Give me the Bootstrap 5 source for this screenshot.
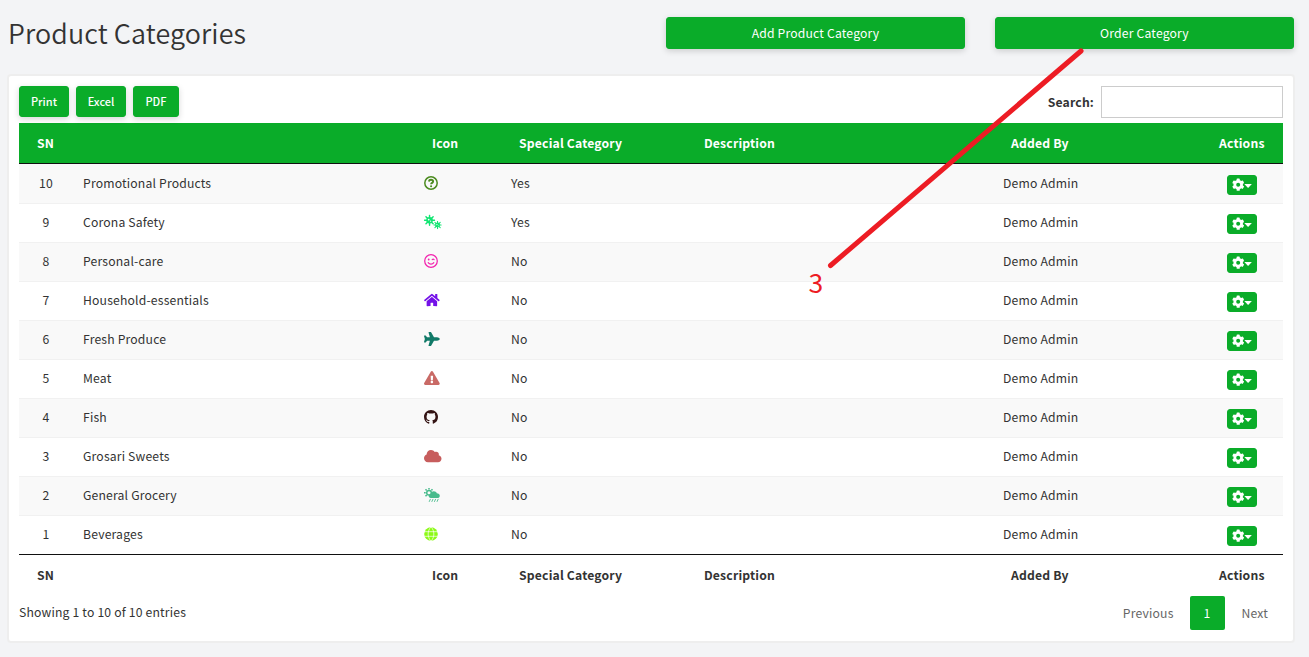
<!DOCTYPE html>
<html lang="en">
<head>
<meta charset="utf-8">
<meta name="viewport" content="width=device-width, initial-scale=1">
<title>Product Categories</title>
<link href="https://cdn.jsdelivr.net/npm/bootstrap@5.3.0/dist/css/bootstrap.min.css" rel="stylesheet">
<style>
  :root { --brand: #0aac29; }
  body { font-family: "Noto Sans CJK SC", "Source Sans Pro", sans-serif; font-size: 12.2px; line-height: 18px; color: #333; background: #f3f4f6; height: 657px; overflow: hidden; position: relative; letter-spacing: .17px; }
  .page-head { height: 74px; padding: 16px 15px 0 8px; }
  .page-head h1 { font-family: "Noto Sans CJK SC DemiLight", "Noto Sans CJK SC", sans-serif; font-size: 26.9px; font-weight: 350; line-height: 34px; letter-spacing: .12px; margin: 0; color: #333; }
  .head-actions { gap: 30px; padding-top: 1px; }
  .btn-brand { --bs-btn-color: #fff; --bs-btn-bg: var(--brand); --bs-btn-border-color: var(--brand); --bs-btn-hover-color: #fff; --bs-btn-hover-bg: #088f22; --bs-btn-hover-border-color: #088f22; --bs-btn-border-radius: 3px; font-size: inherit; line-height: 18px; box-shadow: 0 2px 6px rgba(0,0,0,.16); }
  .btn-wide { width: 299px; height: 32px; padding: 6px; }
  .panel { margin: 0 14px 0 7px; border: 2px solid #eee; border-radius: 4px; height: 569px; padding: 10px 10px 0 10px; }
  .tools { height: 37px; }
  .btn-tool { height: 31px; padding: 4px 0 6px; width: 50px; font-size: 11px; font-weight: 500; letter-spacing: 0; }
  .btn-tool-sm { width: 46px; }
  .search-box { width: 182px; height: 32px; border: 1px solid #ccc; border-radius: 0; padding: 4px 8px; margin-left: 7px; font-size: 12.2px; }
  .cat-table { --bs-table-color: #333; table-layout: fixed; margin: 0; width: 1264px; border-collapse: separate; border-spacing: 0; }
  .cat-table > :not(caption) > * > * { padding: 0 10px 2px; border: 0; height: 39px; box-shadow: none; background: transparent; vertical-align: middle; }
  .cat-table > tbody > tr:nth-child(odd) { background: #f9f9f9; }
  .cat-table > tbody > tr + tr > td { border-top: 1px solid #f1f1f1; padding-bottom: 3px; }
  .cat-table > thead > tr > th { background: var(--brand); color: #fff; border-bottom: 1px solid #111; height: 41px; padding: 0 0 0 18px; }
  .cat-table > tfoot > tr > th { border-top: 1px solid #111; height: 42px; padding: 0 0 2px 18px; color: #333; }
  .ico { display: block; height: 14px; width: auto; overflow: visible; }
  .btn-gear { width: 30px; height: 20px; padding: 0; border-radius: 3px; box-shadow: none; display: inline-flex; vertical-align: middle; transform: translateY(2px); }
  .pager .page-link { border: 0; background: transparent; color: #666; height: 34px; padding: 8px 0; font-size: 12.2px; line-height: 18px; text-align: center; }
  .pager { padding-right: 15px; }
  .pager .active .page-link { background: var(--brand); color: #fff; width: 35px; border-radius: 2px; margin: 0 18px 0 16px; }
  .callout { position: absolute; left: 0; top: 0; pointer-events: none; }
</style>
</head>
<body>
<svg class="d-none">
  <symbol id="gear" viewBox="0 0 30 20">
    <path fill="#fff" transform="translate(4.9 3.4) scale(.0246)" d="M487.4 315.7l-42.6-24.6c4.3-23.2 4.3-47 0-70.2l42.6-24.6c4.9-2.8 7.1-8.6 5.5-14-11.1-35.6-30-67.8-54.7-94.6-3.8-4.1-10-5.1-14.8-2.3L380.8 110c-17.9-15.4-38.5-27.3-60.8-35.1V25.8c0-5.6-3.9-10.5-9.4-11.7-36.7-8.2-74.3-7.8-109.2 0-5.5 1.2-9.4 6.1-9.4 11.7V75c-22.2 7.9-42.8 19.8-60.8 35.1L88.7 85.5c-4.9-2.8-11-1.9-14.8 2.3-24.7 26.7-43.6 58.9-54.7 94.6-1.7 5.4.6 11.2 5.5 14L67.3 221c-4.3 23.2-4.3 47 0 70.2l-42.6 24.6c-4.9 2.8-7.1 8.6-5.5 14 11.1 35.6 30 67.8 54.7 94.6 3.8 4.1 10 5.1 14.8 2.3l42.6-24.6c17.9 15.4 38.5 27.3 60.8 35.1v49.2c0 5.6 3.9 10.5 9.4 11.7 36.7 8.2 74.3 7.8 109.2 0 5.5-1.2 9.4-6.1 9.4-11.7v-49.2c22.2-7.9 42.8-19.8 60.8-35.1l42.6 24.6c4.9 2.8 11 1.9 14.8-2.3 24.7-26.7 43.6-58.9 54.7-94.6 1.5-5.5-.7-11.3-5.6-14.1zM256 336c-44.1 0-80-35.9-80-80s35.9-80 80-80 80 35.9 80 80-35.9 80-80 80z"/>
    <path fill="#fff" d="M17.3 9h7.6l-3.8 3.9z"/>
  </symbol>
  <symbol id="germ" viewBox="-8 -8 16 16">
    <path stroke="currentColor" stroke-width="2" stroke-linecap="round" d="M0-7V7M-7 0H7M-5-5L5 5M-5 5L5-5"/>
    <circle r="4.6" fill="currentColor"/><circle cx="-1.2" cy="-1" r="1.2" fill="#fff"/><circle cx="1.5" cy="1.3" r=".8" fill="#fff"/>
  </symbol>
</svg>

<header class="page-head d-flex justify-content-between align-items-start">
  <h1>Product Categories</h1>
  <div class="head-actions d-flex">
    <a class="btn btn-brand btn-wide">Add Product Category</a>
    <a class="btn btn-brand btn-wide">Order Category</a>
  </div>
</header>

<main class="panel bg-white">
  <div class="tools d-flex justify-content-between align-items-start">
    <div class="d-flex" style="gap:7px">
      <button class="btn btn-brand btn-tool">Print</button>
      <button class="btn btn-brand btn-tool">Excel</button>
      <button class="btn btn-brand btn-tool btn-tool-sm">PDF</button>
    </div>
    <label class="d-flex align-items-center fw-bold">Search:<input type="search" class="search-box" aria-label="Search"></label>
  </div>

  <table class="table cat-table align-middle">
    <colgroup><col style="width:54px"><col style="width:341px"><col style="width:87px"><col style="width:185px"><col style="width:307px"><col style="width:208px"><col style="width:82px"></colgroup>
    <thead><tr><th>SN</th><th></th><th>Icon</th><th>Special Category</th><th>Description</th><th>Added By</th><th>Actions</th></tr></thead>
    <tbody>
      <tr><td class="text-center">10</td><td>Promotional Products</td>
        <td><svg class="ico" viewBox="0 0 14 14" fill="none" stroke="#4b8b1f"><circle cx="7" cy="7" r="6.2" stroke-width="1.5"/><path stroke-width="1.9" d="M4.8 5.5C5.1 4.3 6 3.8 7 3.8c1.2 0 2.1.7 2.1 1.7C9.1 6.9 7.1 6.8 7.1 8.3"/><circle cx="7.1" cy="10.2" r="1.05" fill="#4b8b1f" stroke="none"/></svg></td>
        <td>Yes</td><td></td><td>Demo Admin</td><td class="text-center"><button class="btn btn-brand btn-gear" aria-label="Actions"><svg width="28" height="18" viewBox="1 1 28 18"><use href="#gear" width="30" height="20"/></svg></button></td></tr>
      <tr><td class="text-center">9</td><td>Corona Safety</td>
        <td><svg class="ico" viewBox="0 0 17.5 14" style="color:#12e572"><use href="#germ" x="-.2" y="-.5" width="11.5" height="11.5"/><use href="#germ" x="9.3" y="5.8" width="8.5" height="8.5"/></svg></td>
        <td>Yes</td><td></td><td>Demo Admin</td><td class="text-center"><button class="btn btn-brand btn-gear" aria-label="Actions"><svg width="28" height="18" viewBox="1 1 28 18"><use href="#gear" width="30" height="20"/></svg></button></td></tr>
      <tr><td class="text-center">8</td><td>Personal-care</td>
        <td><svg class="ico" viewBox="0 0 14 14" fill="none" stroke="#f223ae" stroke-linecap="round"><circle cx="7" cy="7" r="6.3" stroke-width="1.25"/><path stroke-width="1.2" d="M4.2 8.7C5.5 10.7 8.5 10.7 9.8 8.7M8.2 5.7c.6-.6 1.3-.6 1.9 0"/><circle cx="4.7" cy="5.5" r=".9" fill="#f223ae" stroke="none"/></svg></td>
        <td>No</td><td></td><td>Demo Admin</td><td class="text-center"><button class="btn btn-brand btn-gear" aria-label="Actions"><svg width="28" height="18" viewBox="1 1 28 18"><use href="#gear" width="30" height="20"/></svg></button></td></tr>
      <tr><td class="text-center">7</td><td>Household-essentials</td>
        <td><svg class="ico" viewBox="0 0 576 512" fill="#7411e8"><path d="M280.37 148.26L96 300.11V464a16 16 0 0 0 16 16l112.06-.29a16 16 0 0 0 15.92-16V368a16 16 0 0 1 16-16h64a16 16 0 0 1 16 16v95.64a16 16 0 0 0 16 16.05L464 480a16 16 0 0 0 16-16V300L295.67 148.26a12.19 12.19 0 0 0-15.3 0zM571.6 251.47L488 182.56V44.05a12 12 0 0 0-12-12h-56a12 12 0 0 0-12 12v72.61L318.47 43a48 48 0 0 0-61 0L4.34 251.47a12 12 0 0 0-1.6 16.9l25.5 31A12 12 0 0 0 45.15 301l235.22-193.74a12.19 12.19 0 0 1 15.3 0L530.9 301a12 12 0 0 0 16.9-1.6l25.5-31a12 12 0 0 0-1.7-16.93z"/></svg></td>
        <td>No</td><td></td><td>Demo Admin</td><td class="text-center"><button class="btn btn-brand btn-gear" aria-label="Actions"><svg width="28" height="18" viewBox="1 1 28 18"><use href="#gear" width="30" height="20"/></svg></button></td></tr>
      <tr><td class="text-center">6</td><td>Fresh Produce</td>
        <td><svg class="ico" viewBox="0 0 576 512" fill="#117a68"><path d="M480 192H365.71L260.61 8.06A16.014 16.014 0 0 0 246.71 0h-65.5c-10.63 0-18.3 10.17-15.38 20.39L214.86 192H112l-43.2-57.6c-3.02-4.03-7.77-6.4-12.8-6.4H16.01C5.6 128-2.04 137.78.49 147.88L32 256 .49 364.12C-2.04 374.22 5.6 384 16.01 384H56c5.04 0 9.78-2.37 12.8-6.4L112 320h102.86l-49.03 171.6c-2.92 10.22 4.75 20.4 15.38 20.4h65.5c5.74 0 11.04-3.08 13.89-8.06L365.71 320H480c35.35 0 96-28.65 96-64s-60.65-64-96-64z"/></svg></td>
        <td>No</td><td></td><td>Demo Admin</td><td class="text-center"><button class="btn btn-brand btn-gear" aria-label="Actions"><svg width="28" height="18" viewBox="1 1 28 18"><use href="#gear" width="30" height="20"/></svg></button></td></tr>
      <tr><td class="text-center">5</td><td>Meat</td>
        <td><svg class="ico" viewBox="0 0 576 512" fill="#c96a66"><path d="M569.517 440.013C587.975 472.007 564.806 512 527.94 512H48.054c-36.937 0-59.999-40.055-41.577-71.987L246.423 23.985c18.467-32.009 64.72-31.951 83.154 0l239.94 416.028zM288 354c-25.405 0-46 20.595-46 46s20.595 46 46 46 46-20.595 46-46-20.595-46-46-46zm-43.673-165.346l7.418 136c.347 6.364 5.609 11.346 11.982 11.346h48.546c6.373 0 11.635-4.982 11.982-11.346l7.418-136c.375-6.874-5.098-12.654-11.982-12.654h-63.383c-6.884 0-12.356 5.78-11.981 12.654z"/></svg></td>
        <td>No</td><td></td><td>Demo Admin</td><td class="text-center"><button class="btn btn-brand btn-gear" aria-label="Actions"><svg width="28" height="18" viewBox="1 1 28 18"><use href="#gear" width="30" height="20"/></svg></button></td></tr>
      <tr><td class="text-center">4</td><td>Fish</td>
        <td><svg class="ico" viewBox="0 0 16 16" fill="#351515"><path d="M8 0C3.58 0 0 3.58 0 8c0 3.54 2.29 6.53 5.47 7.59.4.07.55-.17.55-.38 0-.19-.01-.82-.01-1.49-2.01.37-2.53-.49-2.69-.94-.09-.23-.48-.94-.82-1.13-.28-.15-.68-.52-.01-.53.63-.01 1.08.58 1.23.82.72 1.21 1.87.87 2.33.66.07-.52.28-.87.51-1.07-1.78-.2-3.64-.89-3.64-3.95 0-.87.31-1.59.82-2.15-.08-.2-.36-1.02.08-2.12 0 0 .67-.21 2.2.82.64-.18 1.32-.27 2-.27.68 0 1.36.09 2 .27 1.53-1.04 2.2-.82 2.2-.82.44 1.1.16 1.92.08 2.12.51.56.82 1.27.82 2.15 0 3.07-1.87 3.75-3.65 3.95.29.25.54.73.54 1.48 0 1.07-.01 1.93-.01 2.2 0 .21.15.46.55.38A8.013 8.013 0 0 0 16 8c0-4.42-3.58-8-8-8z"/></svg></td>
        <td>No</td><td></td><td>Demo Admin</td><td class="text-center"><button class="btn btn-brand btn-gear" aria-label="Actions"><svg width="28" height="18" viewBox="1 1 28 18"><use href="#gear" width="30" height="20"/></svg></button></td></tr>
      <tr><td class="text-center">3</td><td>Grosari Sweets</td>
        <td><svg class="ico" viewBox="0 0 640 512" fill="#c75d5d"><path d="M537.6 226.6c4.1-10.7 6.4-22.4 6.4-34.6 0-53-43-96-96-96-19.7 0-38.1 6-53.3 16.2C367 64.2 315.3 32 256 32c-88.4 0-160 71.6-160 160 0 2.7.1 5.4.2 8.1C40.2 219.8 0 273.2 0 336c0 79.5 64.5 144 144 144h368c70.7 0 128-57.3 128-128 0-61.9-44-113.6-102.4-125.4z"/></svg></td>
        <td>No</td><td></td><td>Demo Admin</td><td class="text-center"><button class="btn btn-brand btn-gear" aria-label="Actions"><svg width="28" height="18" viewBox="1 1 28 18"><use href="#gear" width="30" height="20"/></svg></button></td></tr>
      <tr><td class="text-center">2</td><td>General Grocery</td>
        <td><svg class="ico" viewBox="0 0 16 14" fill="#48bb8c" stroke="#48bb8c"><g fill="none"><circle cx="5" cy="4.7" r="2.3" stroke-width="1.5"/><path stroke-width="1.5" d="M5 0v1.5M0 4.7h1.7M1.5 1.3l1.2 1.2M8.5 1.3L7.4 2.4M1.5 8.2l1.2-1.3"/></g><path stroke="none" d="M6.7 10C5.4 10 4.7 9.1 4.7 8.1s.8-1.9 1.9-1.9C6.8 4.4 8.2 3.3 9.8 3.3c1.4 0 2.5.7 3 1.9C14.5 5.2 15.8 6.2 15.8 7.7S14.7 10 13.3 10z"/><path fill="none" stroke-width=".9" stroke-linecap="round" d="M6.3 11.3l-1 2.2M8.9 11.3l-1 2.2M11.5 11.3l-1 2.2M14.1 11.3l-1 2.2"/></svg></td>
        <td>No</td><td></td><td>Demo Admin</td><td class="text-center"><button class="btn btn-brand btn-gear" aria-label="Actions"><svg width="28" height="18" viewBox="1 1 28 18"><use href="#gear" width="30" height="20"/></svg></button></td></tr>
      <tr><td class="text-center">1</td><td>Beverages</td>
        <td><svg class="ico" viewBox="0 0 14 14"><circle cx="7" cy="7" r="6.8" fill="#8cfa16"/><path fill="none" stroke="#fff" stroke-width=".7" d="M0 4.7h14M0 9.3h14M7 0C3.2 3.5 3.2 10.5 7 14M7 0c3.8 3.5 3.8 10.5 0 14"/></svg></td>
        <td>No</td><td></td><td>Demo Admin</td><td class="text-center"><button class="btn btn-brand btn-gear" aria-label="Actions"><svg width="28" height="18" viewBox="1 1 28 18"><use href="#gear" width="30" height="20"/></svg></button></td></tr>
    </tbody>
    <tfoot><tr><th>SN</th><th></th><th>Icon</th><th>Special Category</th><th>Description</th><th>Added By</th><th>Actions</th></tr></tfoot>
  </table>

  <div class="d-flex justify-content-between align-items-center">
    <div style="padding-bottom:2px">Showing 1 to 10 of 10 entries</div>
    <ul class="pagination pager mb-0">
      <li class="page-item"><a class="page-link">Previous</a></li>
      <li class="page-item active"><a class="page-link">1</a></li>
      <li class="page-item"><a class="page-link">Next</a></li>
    </ul>
  </div>
</main>

<!-- Step marker pointing at the Order Category button -->
<svg class="callout" width="1309" height="657">
  <path d="M830.5 265.5L1081 51" stroke="#ed1c24" stroke-width="5" stroke-linecap="round"/>
  <text x="808.5" y="292.5" font-family="Noto Sans CJK SC, sans-serif" font-size="26.5" letter-spacing="0" fill="#ed1c24">3</text>
</svg>
<script src="https://cdn.jsdelivr.net/npm/bootstrap@5.3.0/dist/js/bootstrap.bundle.min.js"></script>
</body>
</html>
